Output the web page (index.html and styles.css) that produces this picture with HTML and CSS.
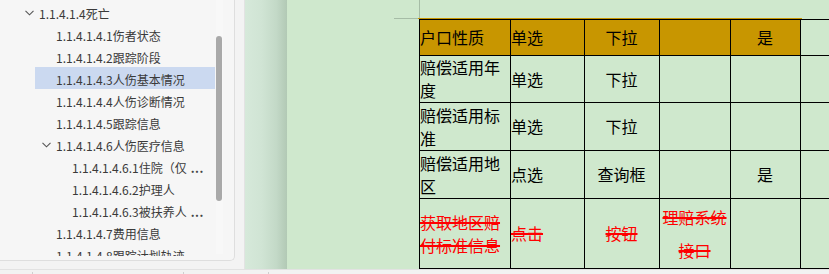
FILE: index.html
```html
<!DOCTYPE html>
<html lang="zh-CN">
<head>
<meta charset="utf-8">
<title>文档</title>
<link rel="stylesheet" href="styles.css">
</head>
<body>
<div class="app">
  <div class="main">
    <aside class="sidebar">
      <div class="card">
        <div class="tree">
          <div class="item l1"><span class="chev"><svg width="9" height="6" viewBox="0 0 9 6"><polyline points="0.5,0.8 4.5,4.8 8.5,0.8" fill="none" stroke="#555" stroke-width="1.1"/></svg></span><span class="label">1.1.4.1.4死亡</span></div>
          <div class="item l2"><span class="chev"></span><span class="label">1.1.4.1.4.1伤者状态</span></div>
          <div class="item l2"><span class="chev"></span><span class="label">1.1.4.1.4.2跟踪阶段</span></div>
          <div class="item l2 selected"><span class="chev"></span><span class="label">1.1.4.1.4.3人伤基本情况</span></div>
          <div class="item l2"><span class="chev"></span><span class="label">1.1.4.1.4.4人伤诊断情况</span></div>
          <div class="item l2"><span class="chev"></span><span class="label">1.1.4.1.4.5跟踪信息</span></div>
          <div class="item l2"><span class="chev"><svg width="9" height="6" viewBox="0 0 9 6"><polyline points="0.5,0.8 4.5,4.8 8.5,0.8" fill="none" stroke="#555" stroke-width="1.1"/></svg></span><span class="label">1.1.4.1.4.6人伤医疗信息</span></div>
          <div class="item l3"><span class="chev"></span><span class="label">1.1.4.1.4.6.1住院（仅<span class="dots">...</span></span></div>
          <div class="item l3"><span class="chev"></span><span class="label">1.1.4.1.4.6.2护理人</span></div>
          <div class="item l3"><span class="chev"></span><span class="label">1.1.4.1.4.6.3被扶养人<span class="dots">...</span></span></div>
          <div class="item l2"><span class="chev"></span><span class="label">1.1.4.1.4.7费用信息</span></div>
          <div class="item l2"><span class="chev"></span><span class="label">1.1.4.1.4.8跟踪计划轨迹</span></div>
        </div>
        <div class="track"><div class="thumb"></div></div>
      </div>
    </aside>
    <div class="shadow"></div>
    <div class="page">
      <div class="crop"></div>
      <div class="tablewrap">
        <div class="goldline"></div>
        <table class="grid">
          <colgroup>
            <col class="c1"><col class="c2"><col class="c3"><col class="c4"><col class="c5"><col class="c6">
          </colgroup>
          <tr class="r-head">
            <td class="gold left">户口性质</td>
            <td class="gold left">单选</td>
            <td class="gold center">下拉</td>
            <td class="gold center"></td>
            <td class="gold center">是</td>
            <td></td>
          </tr>
          <tr class="r2">
            <td class="left">赔偿适用年度</td>
            <td class="left">单选</td>
            <td class="center">下拉</td>
            <td></td>
            <td></td>
            <td></td>
          </tr>
          <tr class="r3">
            <td class="left">赔偿适用标准</td>
            <td class="left">单选</td>
            <td class="center">下拉</td>
            <td></td>
            <td></td>
            <td></td>
          </tr>
          <tr class="r4">
            <td class="left">赔偿适用地区</td>
            <td class="left">点选</td>
            <td class="center">查询框</td>
            <td></td>
            <td class="center">是</td>
            <td></td>
          </tr>
          <tr class="r5">
            <td class="left struck"><s>获取地区赔付标准信息</s></td>
            <td class="left struck"><s>点击</s></td>
            <td class="center struck"><s>按钮</s></td>
            <td class="center struck tall"><s>理赔系统接口</s></td>
            <td></td>
            <td></td>
          </tr>
        </table>
      </div>
    </div>
  </div>
  <div class="status"><span class="tick t1"></span><span class="tick t2"></span><span class="tick t3"></span></div>
</div>
</body>
</html>
```

FILE: styles.css
```css
html, body {
  margin: 0;
  padding: 0;
  width: 829px;
  height: 274px;
  overflow: hidden;
  background: #f3f3f3;
}

.app {
  display: flex;
  flex-direction: column;
  width: 829px;
  height: 274px;
}

.main {
  display: flex;
  height: 269px;
  flex: none;
}

/* ---------- sidebar ---------- */
.sidebar {
  box-sizing: border-box;
  width: 245px;
  flex: none;
  padding-right: 9px;
  border-right: 1px solid #e3e3e3;
  background: #f3f3f3;
}

.card {
  box-sizing: border-box;
  height: 261px;
  display: flex;
  background: #f6f6f6;
  border-right: 1px solid #dedede;
  border-bottom: 1px solid #dedede;
  border-bottom-right-radius: 5px;
}

.tree {
  box-sizing: border-box;
  width: 216px;
  height: 256px;
  padding-top: 1px;
  overflow: hidden;
  flex: none;
}

.item {
  box-sizing: border-box;
  height: 22px;
  display: flex;
  align-items: center;
  padding-right: 8px;
  margin-right: 1px;
  font-family: "Noto Sans CJK SC", "Noto Sans", sans-serif;
  font-size: 12px;
  color: #3a3a3a;
  white-space: nowrap;
}

.item.l1 { padding-left: 25px; }
.item.l2 { padding-left: 42px; }
.item.l3 { padding-left: 58px; }

.item.selected {
  background: linear-gradient(to right, transparent 35px, #cbd9f0 35px);
}

.chev {
  width: 14px;
  flex: none;
  display: flex;
  align-items: center;
  padding-top: 1px;
}

.label {
  flex: 1;
  min-width: 0;
  overflow: hidden;
  padding-top: 2px;
}

.dots {
  margin-left: 4px;
  letter-spacing: 0.5px;
  font-weight: bold;
  color: #444;
}

.track {
  width: 7px;
  height: 254px;
  flex: none;
  background: #f8f8f8;
  display: flex;
  flex-direction: column;
}

.thumb {
  width: 6px;
  height: 165px;
  margin-top: 36px;
  background: #a9a9a9;
  border-radius: 3px;
}

/* ---------- green page ---------- */
.shadow {
  width: 42px;
  flex: none;
  background: linear-gradient(to right, #d6e9da 0%, #d0e4d4 40%, #c3d9c7 75%, #b2c9b5 100%);
}

.page {
  flex: 1;
  min-width: 0;
  overflow: hidden;
  background: #cfe8cd;
  padding-left: 107px;
}

.crop {
  box-sizing: border-box;
  width: 26px;
  height: 19px;
  border-right: 1px solid #a6bca6;
  border-bottom: 1px solid #a6bca6;
}

.tablewrap {
  margin-left: 24px;
  margin-top: -1px;
}

.goldline {
  width: 384px;
  height: 1px;
  background: #c89600;
}

.grid {
  margin-left: 1px;
  border-collapse: collapse;
  table-layout: fixed;
  width: 441px;
  font-family: "Noto Sans CJK SC", sans-serif;
  font-size: 16px;
  line-height: 23px;
  color: #000;
}

.c1 { width: 91px; }
.c2 { width: 74px; }
.c3 { width: 75px; }
.c4 { width: 71px; }
.c5 { width: 70px; }
.c6 { width: 60px; }

.grid td {
  border: 1px solid #000;
  padding: 0 1px 0 0;
  vertical-align: middle;
  overflow: hidden;
}

.r-head { height: 36px; }
.r2 { height: 47px; }
.r3 { height: 48px; }
.r4 { height: 48px; }
.r5 { height: 70px; }

.grid td.gold { background: #c89600; }
.grid td.left { text-align: left; }
.grid td.center { text-align: center; }

.grid td.struck { color: #ff0000; }

.grid td.struck s {
  text-decoration: line-through;
  text-decoration-color: #ff0000;
  text-decoration-thickness: 2px;
}

.grid td.tall { line-height: 33px; }

/* ---------- status bar ---------- */
.status {
  flex: 1;
  display: flex;
  align-items: flex-start;
  background: #f2f2f2;
  border-top: 1px solid #e2e2e2;
}

.tick {
  width: 1px;
  height: 2px;
  margin-top: 2px;
  background: #cfcfcf;
}

.t1 { margin-left: 32px; }
.t2 { margin-left: 150px; }
.t3 { margin-left: 84px; }
```
